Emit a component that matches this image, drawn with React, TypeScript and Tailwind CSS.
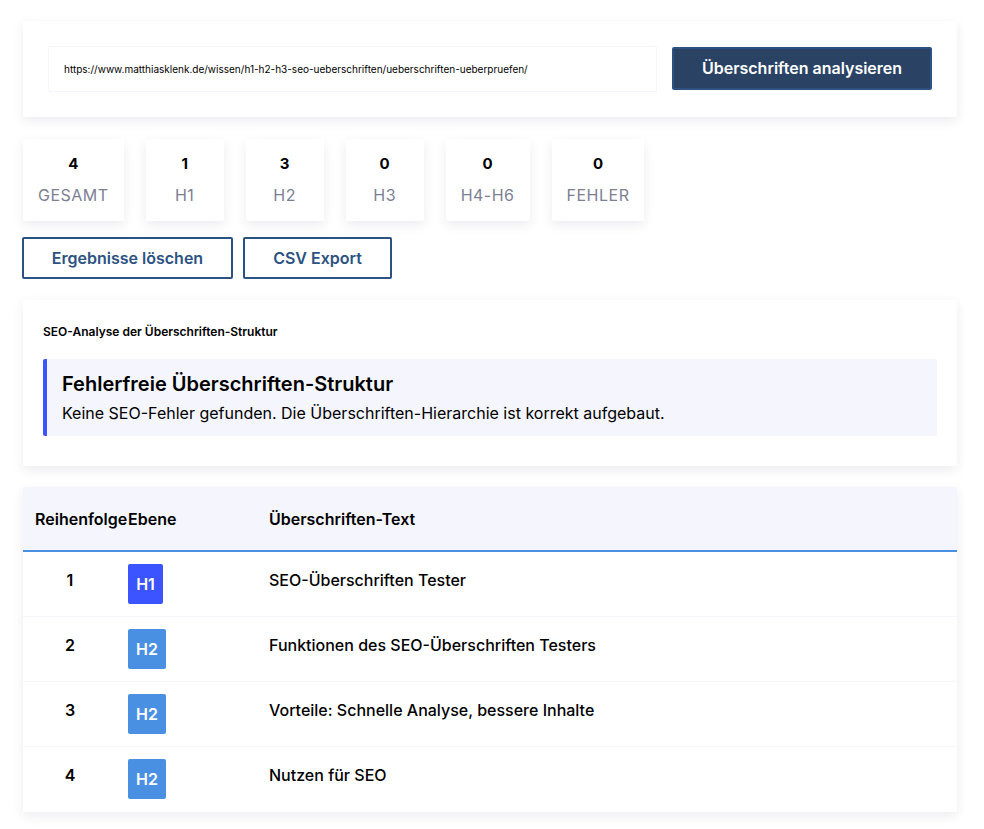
import React from 'react';

interface Stat {
  value: number;
  label: string;
}

interface Heading {
  order: number;
  level: string;
  text: string;
}

const stats: Stat[] = [
  { value: 4, label: 'GESAMT' },
  { value: 1, label: 'H1' },
  { value: 3, label: 'H2' },
  { value: 0, label: 'H3' },
  { value: 0, label: 'H4-H6' },
  { value: 0, label: 'FEHLER' },
];

const headings: Heading[] = [
  { order: 1, level: 'H1', text: 'SEO-Überschriften Tester' },
  { order: 2, level: 'H2', text: 'Funktionen des SEO-Überschriften Testers' },
  { order: 3, level: 'H2', text: 'Vorteile: Schnelle Analyse, bessere Inhalte' },
  { order: 4, level: 'H2', text: 'Nutzen für SEO' },
];

const cardShadow = 'shadow-[0_4px_12px_rgba(40,40,90,0.09)]';

export default function App() {
  return (
    <div className="min-h-[829px] bg-white pl-[23px] pr-[27px] pt-[21px] font-['Inter',sans-serif] text-black">
      {/* URL form */}
      <div className={`flex h-[96px] items-center gap-[15px] rounded-[2px] bg-white px-[25px] ${cardShadow}`}>
        <input
          readOnly
          value="https://www.matthiasklenk.de/wissen/h1-h2-h3-seo-ueberschriften/ueberschriften-ueberpruefen/"
          className="h-[46px] w-[609px] rounded-[2px] border border-[#f3f4fc] bg-white px-[15px] text-[10px] text-black outline-none"
        />
        <button className="mb-[2px] h-[43px] w-[260px] rounded-[2px] border-2 border-[#2c5282] bg-[#2a4365] text-[16px] font-semibold text-white">
          Überschriften analysieren
        </button>
      </div>

      {/* Counters */}
      <div className="mt-[22px] flex gap-[22px]">
        {stats.map((s) => (
          <div key={s.label} className={`flex h-[82px] min-w-[78px] flex-col items-center rounded-[2px] bg-white px-[15px] pt-[15px] ${cardShadow}`}>
            <div className="text-[15px] leading-[20px] font-bold">{s.value}</div>
            <div className="mt-[11px] text-[16px] leading-[20px] tracking-[0.5px] text-[#7c7f94]">{s.label}</div>
          </div>
        ))}
      </div>

      <div className="mt-[16px] -ml-px flex gap-[10px]">
        <button className="h-[42px] w-[211px] rounded-[2px] border-2 border-[#2c5282] bg-white text-[16px] font-semibold text-[#2c5282]">
          Ergebnisse löschen
        </button>
        <button className="h-[42px] w-[149px] rounded-[2px] border-2 border-[#2c5282] bg-white text-[16px] font-semibold text-[#2c5282]">
          CSV Export
        </button>
      </div>

      {/* SEO analysis */}
      <div className={`mt-[21px] h-[166px] rounded-[2px] bg-white px-[20px] pt-[24px] ${cardShadow}`}>
        <h3 className="text-[12px] leading-[15px] font-semibold">SEO-Analyse der Überschriften-Struktur</h3>
        <div className="mt-[20px] h-[77px] rounded-[2px] border-l-4 border-[#3b54ff] bg-[#f4f5fd] pl-[15px] pt-[12px]">
          <div className="text-[20px] leading-[26px] font-semibold">Fehlerfreie Überschriften-Struktur</div>
          <p className="mt-[5px] text-[16px] leading-[22px]">
            Keine SEO-Fehler gefunden. Die Überschriften-Hierarchie ist korrekt aufgebaut.
          </p>
        </div>
      </div>

      {/* Heading list */}
      <div className={`mt-[21px] overflow-hidden rounded-[2px] bg-white pb-px ${cardShadow}`}>
        <table className="w-full table-fixed border-collapse">
          <thead>
            <tr className="h-[64px] border-b-2 border-[#4a90e2] bg-[#f4f5fd] text-left text-[16px]">
              <th className="w-[105px] pl-[12px] font-semibold">Reihenfolge</th>
              <th className="w-[141px] font-semibold">Ebene</th>
              <th className="font-semibold">Überschriften-Text</th>
            </tr>
          </thead>
          <tbody>
            {headings.map((h) => (
              <tr key={h.order} className="h-[65px] border-b border-[#f4f5fd] last:border-b-0">
                <td className="pb-[7px] pl-[12px]">
                  <div className="w-[70px] text-center text-[16px] font-semibold">{h.order}</div>
                </td>
                <td>
                  <span
                    className={`flex h-[40px] items-center justify-center rounded-[2px] text-[16px] font-semibold text-white ${
                      h.level === 'H1' ? 'w-[35px] bg-[#3b54ff]' : 'w-[38px] bg-[#4a90e2]'
                    }`}
                  >
                    {h.level}
                  </span>
                </td>
                <td className="pb-[7px] text-[16px] font-medium">{h.text}</td>
              </tr>
            ))}
          </tbody>
        </table>
      </div>
    </div>
  );
}
